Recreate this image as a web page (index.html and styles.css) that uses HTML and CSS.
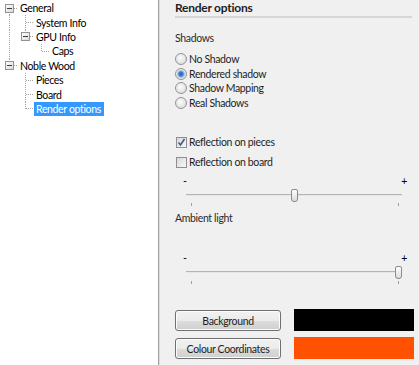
FILE: index.html
```html
<!DOCTYPE html>
<html lang="en">
<head>
    <meta charset="UTF-8">
    <title>Render options</title>
    <link rel="stylesheet" href="styles.css">
</head>
<body>
    <div class="window">
        <!-- Settings tree -->
        <div class="tree">
            <div class="row">
                <span class="cell root-first"><svg class="box" width="9" height="9" viewBox="0 0 9 9"><defs><linearGradient id="bx" x1="0" y1="0" x2="1" y2="1"><stop offset="0" stop-color="#ffffff"/><stop offset="1" stop-color="#d8d8d8"/></linearGradient></defs><rect x="0.5" y="0.5" width="8" height="8" fill="url(#bx)" stroke="#939393"/><path d="M2 4.5h5" stroke="#3c3c3c"/></svg></span>
                <span class="label">General</span>
            </div>
            <div class="row">
                <span class="cell line"></span><span class="cell tee"></span>
                <span class="label">System Info</span>
            </div>
            <div class="row">
                <span class="cell line"></span><span class="cell corner"><svg class="box" width="9" height="9" viewBox="0 0 9 9"><rect x="0.5" y="0.5" width="8" height="8" fill="url(#bx)" stroke="#939393"/><path d="M2 4.5h5" stroke="#3c3c3c"/></svg></span>
                <span class="label">GPU Info</span>
            </div>
            <div class="row">
                <span class="cell line"></span><span class="cell"></span><span class="cell corner"></span>
                <span class="label">Caps</span>
            </div>
            <div class="row">
                <span class="cell corner"><svg class="box" width="9" height="9" viewBox="0 0 9 9"><rect x="0.5" y="0.5" width="8" height="8" fill="url(#bx)" stroke="#939393"/><path d="M2 4.5h5" stroke="#3c3c3c"/></svg></span>
                <span class="label">Noble Wood</span>
            </div>
            <div class="row">
                <span class="cell"></span><span class="cell tee"></span>
                <span class="label">Pieces</span>
            </div>
            <div class="row">
                <span class="cell"></span><span class="cell tee"></span>
                <span class="label">Board</span>
            </div>
            <div class="row">
                <span class="cell"></span><span class="cell corner"></span>
                <span class="label selected">Render options</span>
            </div>
        </div>

        <!-- Options page -->
        <div class="panel">
            <h2 class="heading">Render options</h2>

            <div class="group-label">Shadows</div>
            <div class="radios">
                <label class="option"><input type="radio" name="shadow"> No Shadow</label>
                <label class="option"><input type="radio" name="shadow" checked> Rendered shadow</label>
                <label class="option"><input type="radio" name="shadow"> Shadow Mapping</label>
                <label class="option"><input type="radio" name="shadow"> Real Shadows</label>
            </div>

            <div class="checks">
                <label class="check"><span class="checkbox"><svg width="9" height="9" viewBox="0 0 9 9"><path d="M1.5 4.5l2 2.5 4-6" fill="none" stroke="#3d5a98" stroke-width="1.6"/></svg></span>Reflection on pieces</label>
                <label class="check"><span class="checkbox"></span>Reflection on board</label>
            </div>

            <div class="slider first-slider">
                <div class="ends"><span>-</span><span>+</span></div>
                <input type="range" min="0" max="100" value="50">
                <div class="ticks"><span></span><span></span></div>
            </div>

            <div class="group-label ambient">Ambient light</div>

            <div class="slider second-slider">
                <div class="ends"><span>-</span><span>+</span></div>
                <input type="range" min="0" max="100" value="100">
                <div class="ticks"><span></span><span></span></div>
            </div>

            <div class="colours">
                <div class="colour-row">
                    <button class="btn">Background</button>
                    <div class="swatch" style="background: #000000;"></div>
                </div>
                <div class="colour-row">
                    <button class="btn">Colour Coordinates</button>
                    <div class="swatch" style="background: #ff5100;"></div>
                </div>
            </div>
        </div>
    </div>
</body>
</html>
```

FILE: styles.css
```css
:root {
    --dv: repeating-linear-gradient(to bottom, #a3a3a3 0 1px, transparent 1px 2px);
    --dh: repeating-linear-gradient(to right, #a3a3a3 0 1px, transparent 1px 2px);
}
html, body {
    margin: 0;
    height: 100%;
    overflow: hidden;
}
body {
    font-family: Lato, "Open Sans", sans-serif;
    font-size: 10.5px;
    letter-spacing: -0.35px;
    color: #1e1e1e;
}
.window {
    display: flex;
    height: 365px;
    width: 419px;
}

/* tree */
.tree {
    width: 157px;
    padding: 1px 0 0 1px;
    background: #fff;
    border-right: 1px solid #a0a0a0;
}
.row {
    display: flex;
    align-items: center;
    height: 14.4px;
}
.cell {
    width: 16px;
    height: 100%;
    flex: none;
    display: flex;
    align-items: center;
    justify-content: center;
    padding-right: 1px;
    box-sizing: border-box;
}
.box {
    display: block;
    margin-left: 1px;
}
.line {
    background: var(--dv) 8px 0 / 1px 100% no-repeat;
}
.tee {
    background: var(--dv) 8px 0 / 1px 100% no-repeat,
                var(--dh) 9px 50% / 8px 1px no-repeat;
}
.corner {
    background: var(--dv) 8px 0 / 1px 50% no-repeat,
                var(--dh) 9px 50% / 8px 1px no-repeat;
}
.root-first {
    background: var(--dv) 8px 100% / 1px 50% no-repeat,
                var(--dh) 9px 50% / 8px 1px no-repeat;
}
.label {
    margin-left: 1px;
    padding: 0 3px 0 2px;
    line-height: 14px;
    color: #000;
    white-space: nowrap;
}
.selected {
    background: #3399ff;
    color: #fff;
}

/* options page */
.panel {
    flex: 1;
    background: #f0f0f0;
    border-left: 1px solid #dcdcdc;
    padding-left: 15px;
}
.heading {
    margin: 0;
    width: 237px;
    font-size: 12px;
    font-weight: bold;
    letter-spacing: -0.25px;
    line-height: 16px;
    color: #1e1e1e;
    border-bottom: 2px solid #d6d6d6;
}
.group-label {
    margin-top: 13px;
    line-height: 14px;
    color: #2a2a2a;
}
.radios {
    margin-top: 7px;
}
.option {
    display: flex;
    align-items: center;
    gap: 2px;
    height: 14.5px;
}
.option input {
    -webkit-appearance: none;
    appearance: none;
    width: 12px;
    height: 12px;
    margin: 0;
    border: 1px solid #959595;
    border-radius: 50%;
    background: radial-gradient(circle at 45% 40%, #fdfdfd, #d2d2d2);
    box-sizing: border-box;
}
.option input:checked {
    background: radial-gradient(circle, #1f5db3 0, #3f7fcf 2px, #a9c6e8 3.5px, #eaeaea 4.5px, #d6d6d6 6px);
}
.checks {
    margin-top: 22px;
}
.check {
    display: flex;
    align-items: center;
    gap: 2px;
    height: 20px;
}
.checkbox {
    width: 11px;
    height: 11px;
    margin-left: 1px;
    border: 1px solid #8e8f8f;
    box-sizing: border-box;
    background: linear-gradient(135deg, #d8d8d8, #f8f8f8);
    display: flex;
    align-items: center;
    justify-content: center;
}
.slider {
    margin-top: 3px;
}
.ends {
    display: flex;
    justify-content: space-between;
    width: 224px;
    margin-left: 8px;
    line-height: 12px;
    color: #000;
}
.slider input {
    -webkit-appearance: none;
    appearance: none;
    display: block;
    width: 216px;
    height: 14px;
    margin: 1px 0 0 11px;
    background: transparent;
}
.slider input::-webkit-slider-runnable-track {
    height: 2px;
    background: linear-gradient(#b4b4b4 50%, #e6e6e6 50%);
}
.slider input::-webkit-slider-thumb {
    -webkit-appearance: none;
    width: 7px;
    height: 13px;
    margin-top: -5px;
    border: 1px solid #8a8a8a;
    border-radius: 2px 2px 3px 3px;
    background: linear-gradient(#fefefe, #dcdcdc);
    box-sizing: border-box;
}
.ticks {
    display: flex;
    justify-content: space-between;
    width: 208px;
    margin: 1px 0 0 16px;
}
.ticks span {
    width: 1px;
    height: 3px;
    background: #a0a0a0;
}
.ambient {
    margin-top: 5px;
}
.second-slider {
    margin-top: 27px;
}
.second-slider .ticks {
    margin-top: 2px;
}
.colours {
    margin-top: 25px;
    display: flex;
    flex-direction: column;
    gap: 6px;
}
.colour-row {
    display: flex;
    align-items: flex-start;
    gap: 13px;
    height: 22px;
}
.btn {
    width: 106px;
    height: 21px;
    margin-top: 1px;
    padding: 0;
    font-family: inherit;
    font-size: 10.5px;
    letter-spacing: -0.35px;
    color: #1e1e1e;
    border: 1px solid #707070;
    border-radius: 3px;
    background: linear-gradient(#f2f2f2 0, #ebebeb 50%, #dddddd 50%, #cfcfcf 100%);
    box-shadow: inset 0 0 0 1px #fcfcfc;
}
.swatch {
    width: 120px;
    height: 22px;
}
```
